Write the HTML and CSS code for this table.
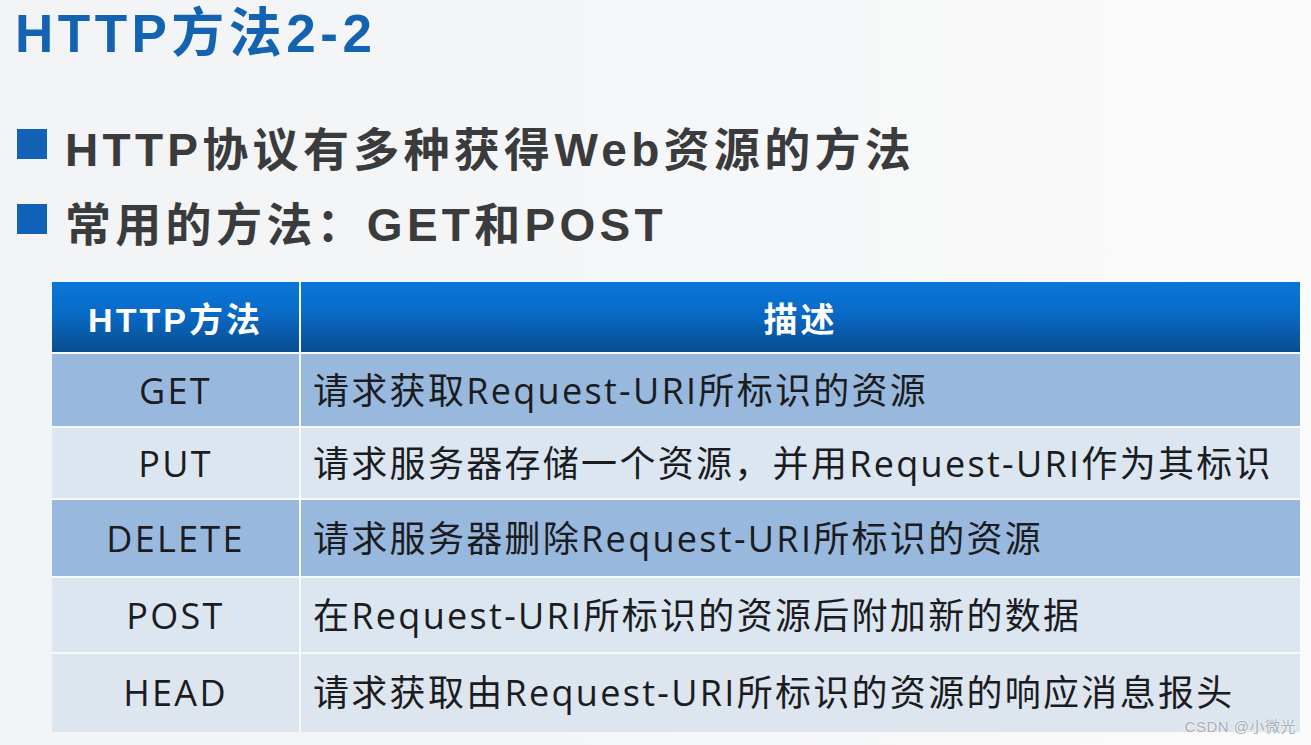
FILE: index.html
```html
<!DOCTYPE html>
<html lang="zh-CN">
<head>
    <meta charset="UTF-8">
    <meta name="viewport" content="width=device-width, initial-scale=1.0">
    <title>HTTP方法2-2</title>
    <link rel="stylesheet" href="styles.css">
</head>
<body>
    <div class="slide">
        <h1 class="title">HTTP方法2-2</h1>
        <ul class="points">
            <li><span class="square"></span>HTTP协议有多种获得Web资源的方法</li>
            <li><span class="square"></span>常用的方法：GET和POST</li>
        </ul>
        <div class="table">
            <div class="th">HTTP方法</div>
            <div class="th">描述</div>

            <div class="td method dark">GET</div>
            <div class="td desc dark">请求获取Request-URI所标识的资源</div>

            <div class="td method light">PUT</div>
            <div class="td desc light">请求服务器存储一个资源，并用Request-URI作为其标识</div>

            <div class="td method dark">DELETE</div>
            <div class="td desc dark">请求服务器删除Request-URI所标识的资源</div>

            <div class="td method light">POST</div>
            <div class="td desc light">在Request-URI所标识的资源后附加新的数据</div>

            <div class="td method light last">HEAD</div>
            <div class="td desc light last">请求获取由Request-URI所标识的资源的响应消息报头</div>
        </div>
        <div class="watermark">CSDN @小微光</div>
    </div>
</body>
</html>
```

FILE: styles.css
```css
* {
    margin: 0;
    padding: 0;
    box-sizing: border-box;
}
body {
    background: #f4f5f6;
    font-family: "Liberation Sans", "Noto Sans CJK SC", sans-serif;
    width: 1311px;
    height: 745px;
    overflow: hidden;
}
.slide {
    position: relative;
    height: 745px;
    background: linear-gradient(to right, #f2f3f4 0%, #f6f7f8 60%, #fbfbfb 100%);
}
.title {
    padding: 4px 0 0 15px;
    font-size: 53px;
    line-height: 60px;
    font-weight: bold;
    letter-spacing: 4.5px;
    color: #1463b2;
}
.points {
    list-style: none;
    margin-top: 54px;
    display: flex;
    flex-direction: column;
    gap: 19px;
}
.points li {
    display: flex;
    align-items: center;
    height: 56px;
    padding-left: 17px;
    font-size: 46px;
    font-weight: bold;
    letter-spacing: 4.3px;
    color: #3a3b3d;
}
.square {
    width: 30px;
    height: 30px;
    margin-right: 18px;
    margin-top: -4px;
    background: #1162b6;
    flex-shrink: 0;
}
.table {
    margin: 33px 0 0 52px;
    width: 1248px;
    display: grid;
    grid-template-columns: 247px 1fr;
    grid-template-rows: 70px 72px 70px 76px 74px 78px;
    gap: 2px;
    background: #f7f9fb;
}
.th {
    display: flex;
    align-items: center;
    justify-content: center;
    background: linear-gradient(to bottom, #0b76d8 0%, #086ac6 45%, #0a4c8f 100%);
    color: #fff;
    font-size: 34px;
    font-weight: bold;
    letter-spacing: 3px;
}
.td {
    display: flex;
    align-items: center;
    padding-top: 2px;
    font-family: "Open Sans", "Noto Sans CJK SC", sans-serif;
    font-size: 36px;
    line-height: 1.2;
    letter-spacing: 2.3px;
    color: #1b1c1f;
}
.method {
    justify-content: center;
}
.desc {
    padding-left: 12px;
}
.dark {
    background: #98b9dd;
}
.light {
    background: #dce6f1;
}
.last {
    background: #dde5ef;
    padding-top: 0;
}
.watermark {
    position: absolute;
    right: 15px;
    bottom: 10px;
    font-size: 15px;
    line-height: 17px;
    letter-spacing: 0.5px;
    color: #a3abb4;
    text-shadow: 0 0 2px #fff, 0 0 1px #fff;
}
```
